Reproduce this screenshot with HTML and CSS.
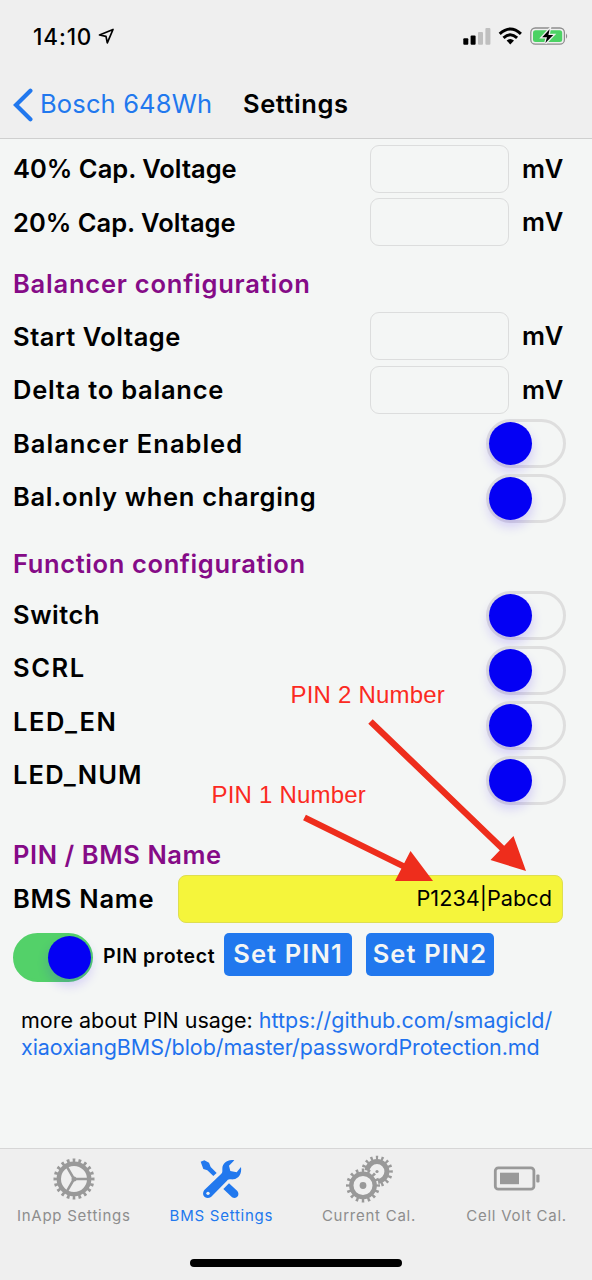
FILE: index.html
```html
<!DOCTYPE html>
<html lang="en">
<head>
<meta charset="utf-8">
<title>Settings</title>
<link rel="stylesheet" href="styles.css">
</head>
<body>
<div class="screen">
  <header class="top">
    <div class="status">
      <span class="time">14:10</span>
      <svg class="loc" width="17" height="17" viewBox="0 0 17 17"><path d="M1.5 7 L15 1.5 L9.3 14.8 L8 8.3 Z" fill="none" stroke="#000" stroke-width="1.7" stroke-linejoin="round"/></svg>
      <svg class="indicators" width="108" height="20" viewBox="0 0 108 20">
        <rect x="0.3" y="11.3" width="5" height="6.4" rx="1"/><rect x="7.6" y="8.5" width="5" height="9.2" rx="1"/>
        <rect x="15" y="5" width="5" height="12.7" rx="1" fill="#bfbfbf"/><rect x="22.4" y="1" width="5" height="16.7" rx="1" fill="#bfbfbf"/>
        <g fill="none" stroke="#000" stroke-width="3"><path d="M36.7 6.9 Q47.3 -3 57.9 6.9"/><path d="M40.5 10.8 Q47.3 4.6 54.1 10.8"/></g>
        <path d="M43.6 13.6 Q47.3 10.5 51 13.6 L47.3 17.4 Z"/>
        <rect x="67.8" y="1" width="33.6" height="16.2" rx="4.5" fill="none" stroke="#8e8e8e" stroke-width="1.3"/>
        <rect x="70" y="3.2" width="29.2" height="11.8" rx="2.5" fill="#4cd264"/>
        <path d="M103 6.5 Q105.4 9.1 103 11.8 Z" fill="#8e8e8e"/>
        <path d="M86.6 2.2 L79.2 10.2 H84 L82.4 16 L90.2 8 H85.4 Z" fill="#000" stroke="#efefef" stroke-width="2.6" paint-order="stroke"/>
      </svg>
    </div>
    <nav class="nav">
      <svg class="chev" width="20" height="34" viewBox="0 0 20 34"><path d="M17.4 2.8 L3 17 L17.4 31.2" fill="none" stroke="#2178ee" stroke-width="4.2" stroke-linecap="round"/></svg>
      <span class="back">Bosch 648Wh</span>
      <span class="title">Settings</span>
    </nav>
  </header>

  <main class="content">
    <section class="group cap">
      <div class="labels"><div>40% Cap. Voltage</div><div>20% Cap. Voltage</div></div>
      <div class="controls">
        <div class="field"><i class="box"></i><b>mV</b></div>
        <div class="field"><i class="box"></i><b>mV</b></div>
      </div>
    </section>
    <h2>Balancer configuration</h2>
    <section class="group balancer">
      <div class="labels"><div class="t55">Start Voltage</div><div class="t75">Delta to balance</div><div class="t100">Balancer Enabled</div><div class="t65">Bal.only when charging</div></div>
      <div class="controls">
        <div class="field"><i class="box"></i><b>mV</b></div>
        <div class="field"><i class="box"></i><b>mV</b></div>
        <div class="switch"><i></i></div>
        <div class="switch"><i></i></div>
      </div>
    </section>
    <h2 class="fn">Function configuration</h2>
    <section class="group function">
      <div class="labels"><div class="t55">Switch</div><div class="t150">SCRL</div><div class="t150">LED_EN</div><div class="t115">LED_NUM</div></div>
      <div class="controls">
        <div class="switch"><i></i></div><div class="switch"><i></i></div>
        <div class="switch"><i></i></div><div class="switch"><i></i></div>
      </div>
    </section>
    <h2 class="pin">PIN / BMS Name</h2>
    <div class="namerow"><span class="t75">BMS Name</span><div class="name">P1234|Pabcd</div></div>
    <div class="pinrow">
      <div class="switch on"><i></i></div>
      <span class="protect">PIN protect</span>
      <div class="btn">Set PIN1</div>
      <div class="btn">Set PIN2</div>
    </div>
    <p class="more">more about PIN usage: <a>https://github.com/smagicld/</a><br><a class="rest">xiaoxiangBMS/blob/master/passwordProtection.md</a></p>
  </main>

  <footer class="tabs">
    <div class="tab">
      <svg width="44" height="44" viewBox="-22 -22 44 44" fill="none" stroke="#999">
        <circle r="15.2" stroke-width="4.4"/>
        <circle r="18.6" stroke-width="3.8" pathLength="20" stroke-dasharray=".46 .54" stroke-dashoffset=".23"/>
        <path d="M0 0 H14 M0 0 L-7 -12.1 M0 0 L-7 12.1" stroke-width="2.5"/><circle r="2.5" fill="#999" stroke="none"/>
      </svg>
      <span>InApp Settings</span>
    </div>
    <div class="tab active">
      <svg width="44" height="44" viewBox="600 81 132 132" fill="#2178ee">
        <path d="M706 91 C687 87 670 99 670 116 C670 123 671 127 667 131 L616 180 C605 195 620 211 636 201 L684 152 C690 146 697 149 703 148 C719 146 729 131 726 111 L713 127 L694 123 L690 107 Z"/>
        <circle cx="627" cy="190" r="5" fill="#efefef"/>
        <path d="M605 95 L616 91 L630 98 L635 111 L653 129 L643 138 L625 121 L613 117 Z"/>
        <path d="M690 160 L715 183 C722 192 717 204 706 204 C702 204 699 202 696 199 L673 177 Z"/>
      </svg>
      <span>BMS Settings</span>
    </div>
    <div class="tab">
      <svg class="gears" width="50" height="50" viewBox="344 1154 50 50" fill="none" stroke="#999">
        <g transform="translate(377 1171.5)"><circle r="9.9" stroke-width="5"/><circle r="13.8" stroke-width="4" pathLength="16" stroke-dasharray=".42 .58" stroke-dashoffset=".21"/><circle r="1.6" fill="#999" stroke="none"/></g>
        <circle cx="363" cy="1185.5" r="15.5" fill="#efefef" stroke="none"/>
        <g transform="translate(363 1185.5)"><circle r="11.7" stroke-width="4.4"/><circle r="15" stroke-width="4" pathLength="16" stroke-dasharray=".42 .58" stroke-dashoffset=".21"/><circle r="3.4" fill="#999" stroke="none"/></g>
      </svg>
      <span>Current Cal.</span>
    </div>
    <div class="tab">
      <svg width="48" height="44" viewBox="0 0 48 44" fill="#999">
        <rect x="2.3" y="10.8" width="38.6" height="21.4" rx="3" fill="none" stroke="#999" stroke-width="2.8"/>
        <rect x="7" y="15.7" width="19" height="11.5"/><rect x="43.3" y="17.5" width="3.2" height="8" rx="1"/>
      </svg>
      <span>Cell Volt Cal.</span>
    </div>
  </footer>
  <div class="home"></div>

  <svg class="arrows" width="592" height="1280" viewBox="0 0 592 1280" fill="#ee2d1c" stroke="#ee2d1c" stroke-width="6.4">
    <path d="M304.5 817.5 L405 867 M370.5 721.5 L505 851"/>
    <path d="M410.5 851 L433 881 L395 881 Z M513.5 836 L526 871 L490.5 860 Z" stroke="none"/>
  </svg>
  <span class="note note2">PIN 2 Number</span>
  <span class="note note1">PIN 1 Number</span>
</div>
</body>
</html>
```
FILE: styles.css
```css
* { box-sizing: border-box; }
body { margin: 0; font-family: Inter, "Liberation Sans", sans-serif; background: #f4f6f5; color: #000; }
.screen { position: relative; width: 592px; height: 1280px; overflow: hidden; display: flex; flex-direction: column; background: #f4f6f5; white-space: nowrap; }
.top { height: 139px; flex: none; background: #efefef; border-bottom: 1px solid #cfcfcf; }
.status { display: flex; align-items: center; height: 72px; padding: 0 21px 0 33px; }
.time { font-size: 22.5px; font-weight: 500; letter-spacing: .9px; width: 65px; }
.loc { display: block; }
.indicators { margin-left: auto; display: block; margin-top: 2px; }
.nav { display: flex; align-items: center; height: 65px; padding-left: 13px; font-size: 25.5px; }
.back { color: #2178ee; margin-left: 7px; width: 203px; letter-spacing: .15px; line-height: 30px; margin-top: -1px; }
.title { font-weight: 600; letter-spacing: .55px; line-height: 30px; margin-top: -1px; }

.content { flex: 1; padding: 3px 27px 0 13px; font-weight: 600; font-size: 25.5px; }
.group { display: flex; justify-content: space-between; }
.labels div { height: 53.6px; line-height: 53.6px; }
.t55 { letter-spacing: .55px; }
.t65 { letter-spacing: .67px; }
.t75 { letter-spacing: .75px; }
.t100 { letter-spacing: 1px; }
.t115 { letter-spacing: 1.15px; }
.t150 { letter-spacing: 1.6px; }
.cap { height: 107.5px; }
.balancer { height: 214px; }
.function { height: 215px; }
h2 { margin: 0; height: 60px; line-height: 68px; font-size: 25.5px; font-weight: 600; letter-spacing: .78px; color: #850b87; }
.fn { height: 64px; line-height: 80px; letter-spacing: .62px; }
.pin { height: 72px; line-height: 104px; letter-spacing: .57px; }
.controls { display: flex; flex-direction: column; align-items: flex-end; padding-top: 2.5px; }
.field { display: flex; align-items: center; gap: 13px; width: 195px; height: 48px; margin-bottom: 5.5px; }
.field b { font-weight: 600; letter-spacing: 1px; margin-top: -1px; }
.box { width: 139px; height: 48px; border: 1px solid #dcdddd; border-radius: 9px; }
.switch { width: 80px; height: 49px; flex: none; border: 3px solid #dedede; border-radius: 25px; margin: 0 -1px 6.2px 0; }
.switch i { display: block; width: 43px; height: 43px; border-radius: 50%; background: #0400f4; box-shadow: 0 6px 12px rgba(60,20,255,.2); }
.function .controls { padding-top: 3px; }
.switch.on { background: #53d169; border-color: #53d169; margin: 0; padding-left: 31.5px; }
.namerow { display: flex; align-items: center; height: 48px; margin-right: 2px; justify-content: space-between; }
.name { width: 385px; height: 48px; line-height: 45px; border: 1px solid #dede50; border-radius: 8px; background: #f5f53b; text-align: right; padding-right: 10px; font-size: 21.7px; font-weight: 400; }
.pinrow { display: flex; align-items: flex-start; margin-top: 10px; height: 50px; }
.protect { font-size: 19.5px; line-height: 47px; width: 121px; margin-left: 10px; letter-spacing: .6px; }
.btn { width: 128px; height: 43px; line-height: 42px; margin-right: 14px; border-radius: 5px; background: #2178ee; color: #f4f6f5; text-align: center; letter-spacing: 1.1px; }
.more { margin: 24px 0 0 8px; font-size: 21.5px; line-height: 27px; font-weight: 400; }
.more a { color: #1f72ee; }
.more .rest { letter-spacing: -.06px; }
.tabs { height: 132px; flex: none; display: flex; background: #efefef; border-top: 1.5px solid #d6d6d6; padding-top: 8px; }
.tab { width: 147.6px; display: flex; flex-direction: column; align-items: center; color: #8d8d8d; font-size: 15px; letter-spacing: .75px; }
.tab svg { display: block; height: 44px; overflow: visible; }
.tab svg.gears { height: 50px; margin: -3px 0; }
.tab span { line-height: 20px; margin-top: 5px; }
.tab.active { color: #2178ee; }
.home { position: absolute; left: 190px; top: 1259px; width: 212px; height: 8px; border-radius: 4px; background: #000; }
.arrows { position: absolute; left: 0; top: 0; }
.note { position: absolute; font: 24px/28px "Liberation Sans", Arial, sans-serif; letter-spacing: .2px; color: #fb2a22; }
.note2 { left: 290.5px; top: 681px; }
.note1 { left: 211.5px; top: 781px; }
```
